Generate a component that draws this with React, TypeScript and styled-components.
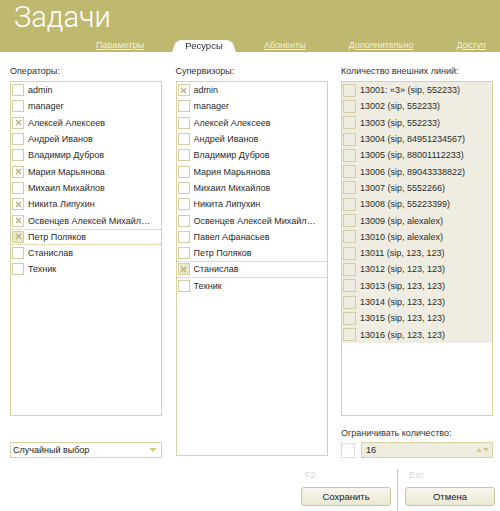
import React from "react";
import styled, { createGlobalStyle } from "styled-components";

const GlobalStyle = createGlobalStyle`
  html, body { margin: 0; padding: 0; background: #fff; }
  body { font-family: "Liberation Sans", Arial, sans-serif; font-size: 9px; color: #222; }
  * { box-sizing: border-box; }
`;

const Page = styled.div`
  width: 500px;
  height: 511px;
  display: flex;
  flex-direction: column;
  overflow: hidden;
`;

const Header = styled.header`
  height: 52px;
  background: #bfb970;
  display: flex;
  flex-direction: column;
`;

const Title = styled.h1`
  margin: 0;
  padding-left: 14px;
  height: 38px;
  line-height: 34px;
  font-family: Roboto, "Liberation Sans", sans-serif;
  font-weight: 300;
  font-size: 29px;
  color: #fff;
  white-space: nowrap;
`;

const TabBar = styled.nav`
  height: 14px;
  display: flex;
  align-items: flex-end;
`;

const TabLink = styled.a<{ $ml: number }>`
  margin-left: ${(p) => p.$ml}px;
  height: 14px;
  line-height: 15px;
  font-size: 9px;
  color: #f4f1da;
  text-decoration: underline;
  white-space: nowrap;
  cursor: pointer;
`;

const ActiveTab = styled.div<{ $ml: number }>`
  position: relative;
  margin-left: ${(p) => p.$ml}px;
  width: 64px;
  height: 14px;
  line-height: 16px;
  text-align: center;
  font-size: 9.5px;
  color: #333;
  &::before {
    content: "";
    position: absolute;
    inset: 0;
    z-index: 0;
    background: #fff;
    border-radius: 6px 6px 0 0;
    transform: perspective(14px) rotateX(9deg);
    transform-origin: bottom;
  }
  span { position: relative; z-index: 1; }
`;

const Main = styled.main`
  padding: 13px 7px 0 10px;
  display: grid;
  grid-template-columns: 152px 152px 152px;
  column-gap: 13.5px;
  align-items: start;
`;

const Column = styled.section`
  display: flex;
  flex-direction: column;
`;

const Label = styled.div<{ $mt?: number; $mb?: number }>`
  height: 13px;
  line-height: 13px;
  margin-top: ${(p) => p.$mt ?? 0}px;
  margin-bottom: ${(p) => p.$mb ?? 3}px;
  color: #333;
  white-space: nowrap;
`;

const ListBox = styled.div<{ $h: number }>`
  height: ${(p) => p.$h}px;
  border: 1px solid #d9d2a4;
  background: #fff;
  overflow: hidden;
`;

const Rows = styled.div<{ $disabled?: boolean }>`
  background: ${(p) => (p.$disabled ? "#efede1" : "transparent")};
`;

const Row = styled.div<{ $focused?: boolean }>`
  height: 16.3px;
  display: flex;
  align-items: center;
  padding-left: 1px;
  gap: 4px;
  white-space: nowrap;
  border-top: 1px ${(p) => (p.$focused ? "dotted #c9c195" : "solid transparent")};
  border-bottom: 1px ${(p) => (p.$focused ? "dotted #c9c195" : "solid transparent")};
`;

const Box = styled.span<{ $size: number; $fill?: string }>`
  flex: none;
  width: ${(p) => p.$size}px;
  height: ${(p) => p.$size}px;
  border: 1px solid #d6cea3;
  background: ${(p) => p.$fill ?? "#fff"};
  display: flex;
  align-items: center;
  justify-content: center;
`;

const RowText = styled.span`
  overflow: hidden;
  text-overflow: ellipsis;
  padding-right: 6px;
  color: #2a2a2a;
`;

const Select = styled.div`
  height: 16px;
  border: 1px solid #d9d2a4;
  display: flex;
  align-items: center;
  justify-content: space-between;
  padding: 0 4px 0 2px;
  margin-top: 26px;
`;

const Arrow = styled.span`
  width: 0;
  height: 0;
  border-left: 4px solid transparent;
  border-right: 4px solid transparent;
  border-top: 4px solid #d4cc8e;
`;

const LimitRow = styled.div`
  display: flex;
  gap: 6px;
  align-items: center;
`;

const DottedBox = styled.span`
  width: 14px;
  height: 15px;
  border: 1px dotted #cfc9a3;
  background: #fff;
`;

const NumberField = styled.div`
  flex: 1;
  height: 16px;
  border: 1px solid #d9d2a4;
  background: #efede0;
  display: flex;
  align-items: center;
  justify-content: space-between;
  padding: 0 3px 0 4px;
`;

const Spin = styled.span`
  display: flex;
  gap: 1px;
  align-items: center;
`;

const Tri = styled.span<{ $up?: boolean }>`
  width: 0;
  height: 0;
  border-left: 3.5px solid transparent;
  border-right: 3.5px solid transparent;
  ${(p) =>
    p.$up ? "border-bottom: 4px solid #d4cc8e;" : "border-top: 4px solid #d4cc8e;"}
`;

const Footer = styled.footer`
  margin-top: 11px;
  height: 42px;
  display: flex;
  justify-content: flex-end;
  padding-right: 5px;
`;

const ActionGroup = styled.div`
  width: 90px;
  display: flex;
  flex-direction: column;
`;

const Hint = styled.div`
  height: 13px;
  line-height: 13px;
  padding-left: 4px;
  color: #d6d6d6;
`;

const Button = styled.button`
  margin-top: 5px;
  height: 19px;
  border: 1px solid #cdc69a;
  border-radius: 3px;
  background: linear-gradient(#f7f6ec, #ebe8d4);
  font-family: "Liberation Sans", Arial, sans-serif;
  font-size: 9.5px;
  color: #222;
  padding: 0;
`;

const Separator = styled.div`
  width: 1px;
  height: 42px;
  background: #cfc89b;
  margin: 0 7px 0 6px;
`;

const Mark = () => (
  <svg width="7" height="7" viewBox="0 0 7 7">
    <path d="M1 1L6 6M6 1L1 6" stroke="#b7b07a" strokeWidth="1.3" />
  </svg>
);

type Item = { name: string; checked?: boolean; focused?: boolean };

const operators: Item[] = [
  { name: "admin" },
  { name: "manager" },
  { name: "Алексей Алексеев", checked: true },
  { name: "Андрей Иванов" },
  { name: "Владимир Дубров" },
  { name: "Мария Марьянова", checked: true },
  { name: "Михаил Михайлов" },
  { name: "Никита Липухин", checked: true },
  { name: "Освенцев Алексей Михайлович", checked: true },
  { name: "Петр Поляков", checked: true, focused: true },
  { name: "Станислав" },
  { name: "Техник" },
];

const supervisors: Item[] = [
  { name: "admin", checked: true },
  { name: "manager" },
  { name: "Алексей Алексеев" },
  { name: "Андрей Иванов" },
  { name: "Владимир Дубров" },
  { name: "Мария Марьянова" },
  { name: "Михаил Михайлов" },
  { name: "Никита Липухин" },
  { name: "Освенцев Алексей Михайлович" },
  { name: "Павел Афанасьев" },
  { name: "Петр Поляков" },
  { name: "Станислав", checked: true, focused: true },
  { name: "Техник" },
];

const lines: string[] = [
  "13001: «3» (sip, 552233)",
  "13002 (sip, 552233)",
  "13003 (sip, 552233)",
  "13004 (sip, 84951234567)",
  "13005 (sip, 88001112233)",
  "13006 (sip, 89043338822)",
  "13007 (sip, 5552266)",
  "13008 (sip, 55223399)",
  "13009 (sip, alexalex)",
  "13010 (sip, alexalex)",
  "13011 (sip, 123, 123)",
  "13012 (sip, 123, 123)",
  "13013 (sip, 123, 123)",
  "13014 (sip, 123, 123)",
  "13015 (sip, 123, 123)",
  "13016 (sip, 123, 123)",
];

const CheckList = ({ items }: { items: Item[] }) => (
  <Rows>
    {items.map((it) => (
      <Row key={it.name} $focused={it.focused}>
        <Box $size={12} $fill={it.focused ? "#ebe7cd" : "#fff"}>
          {it.checked && <Mark />}
        </Box>
        <RowText>{it.name}</RowText>
      </Row>
    ))}
  </Rows>
);

export default function App() {
  return (
    <Page>
      <GlobalStyle />
      <Header>
        <Title>Задачи</Title>
        <TabBar>
          <TabLink $ml={96}>Параметры</TabLink>
          <ActiveTab $ml={28}>
            <span>Ресурсы</span>
          </ActiveTab>
          <TabLink $ml={28}>Абоненты</TabLink>
          <TabLink $ml={43}>Дополнительно</TabLink>
          <TabLink $ml={43}>Доступ</TabLink>
        </TabBar>
      </Header>
      <Main>
        <Column>
          <Label>Операторы:</Label>
          <ListBox $h={335}>
            <CheckList items={operators} />
          </ListBox>
          <Select>
            <span>Случайный выбор</span>
            <Arrow />
          </Select>
        </Column>
        <Column>
          <Label>Супервизоры:</Label>
          <ListBox $h={375}>
            <CheckList items={supervisors} />
          </ListBox>
        </Column>
        <Column>
          <Label>Количество внешних линий:</Label>
          <ListBox $h={335}>
            <Rows $disabled>
              {lines.map((l) => (
                <Row key={l}>
                  <Box $size={13} $fill="#efede1" />
                  <RowText>{l}</RowText>
                </Row>
              ))}
            </Rows>
          </ListBox>
          <Label $mt={11} $mb={2}>Ограничивать количество:</Label>
          <LimitRow>
            <DottedBox />
            <NumberField>
              <span>16</span>
              <Spin>
                <Tri $up />
                <Tri />
              </Spin>
            </NumberField>
          </LimitRow>
        </Column>
      </Main>
      <Footer>
        <ActionGroup>
          <Hint>F2</Hint>
          <Button>Сохранить</Button>
        </ActionGroup>
        <Separator />
        <ActionGroup>
          <Hint>Esc</Hint>
          <Button>Отмена</Button>
        </ActionGroup>
      </Footer>
    </Page>
  );
}
